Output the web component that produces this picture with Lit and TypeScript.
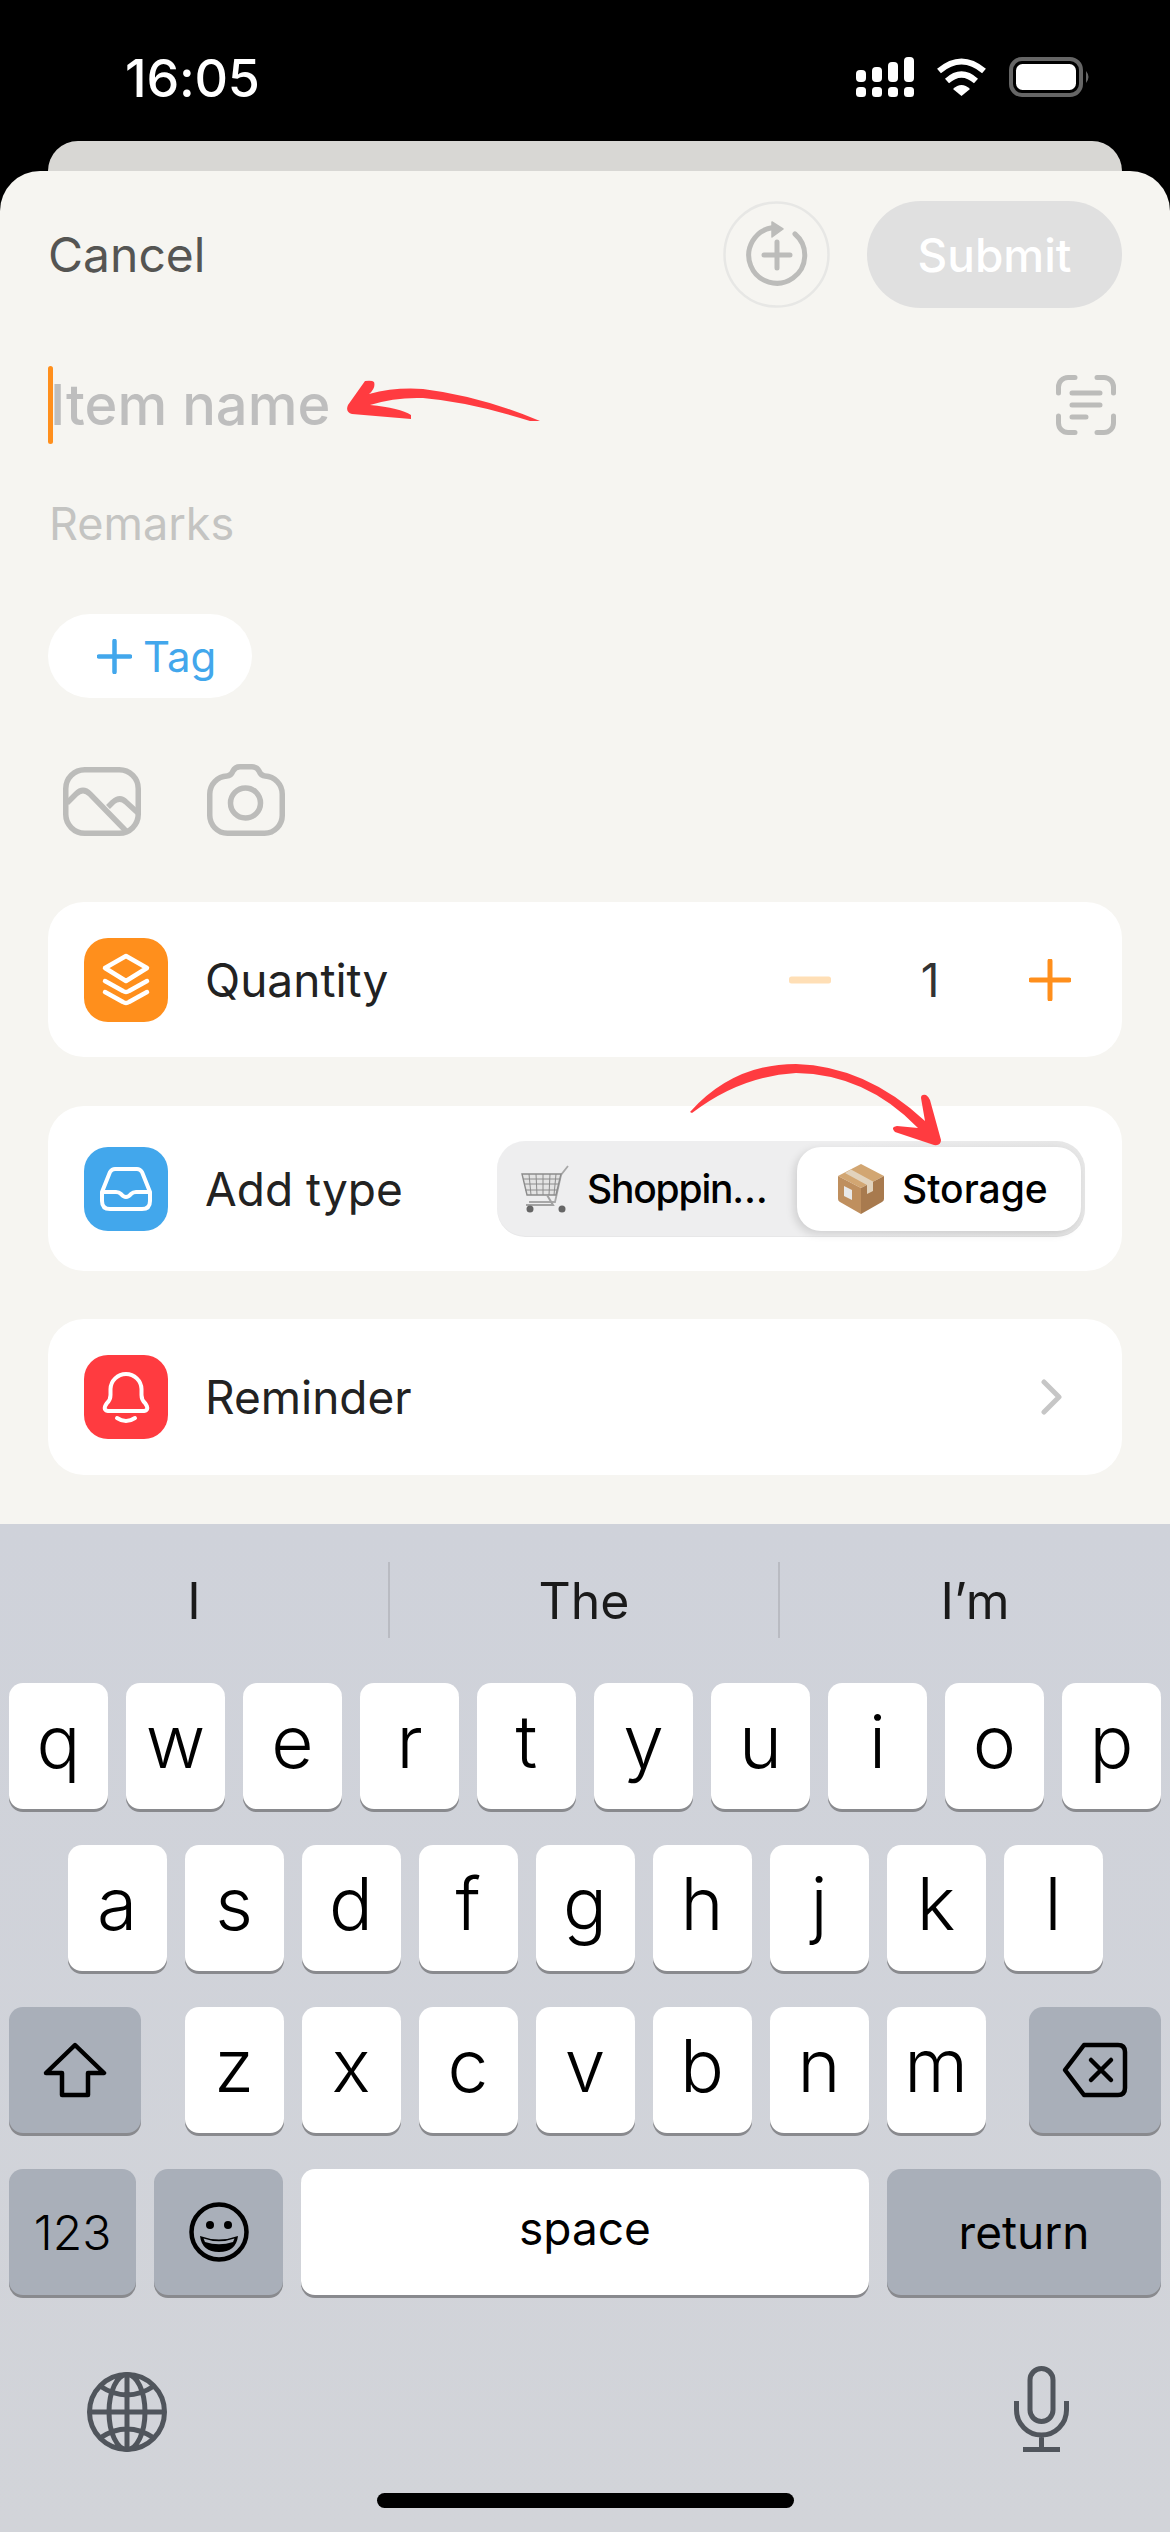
import { LitElement, html, css } from "lit";
import { customElement } from "lit/decorators.js";

const row1 = "qwertyuiop".split("");
const row2 = "asdfghjkl".split("");
const row3 = "zxcvbnm".split("");

@customElement("app-root")
export class AppRoot extends LitElement {
  static styles = css`
    :host { display: block; position: relative; width: 1170px; height: 2532px; background: #000; overflow: hidden; font-family: Inter, "Noto Sans", sans-serif; }
    .page { display: flex; flex-direction: column; height: 2532px; }
    .status { height: 141px; flex: none; display: flex; align-items: flex-start; padding: 57px 79px 0 125px; box-sizing: border-box; justify-content: space-between; color: #fff; }
    .time { font-size: 52px; font-weight: 500; line-height: 44px; letter-spacing: -0.2px; }
    .status-icons { display: flex; align-items: flex-start; gap: 22px; }
    .backsheet { height: 30px; flex: none; margin: 0 48px; background: #d8d7d4; border-radius: 34px 34px 0 0; }
    .sheet { height: 1353px; flex: none; box-sizing: border-box; background: #f6f5f1; border-radius: 40px 40px 0 0; padding: 30px 48px 0; display: flex; flex-direction: column; }
    .header { display: flex; align-items: center; height: 107px; }
    .cancel { font-size: 48px; color: #555553; flex: 1; }
    .submit { width: 255px; height: 107px; border-radius: 54px; background: #e0e0e0; color: #fff; font-size: 46px; font-weight: 500; display: flex; align-items: center; justify-content: center; margin-left: 37px; }
    .name-row { display: flex; align-items: center; height: 78px; margin-top: 58px; position: relative; }
    .caret { width: 5px; height: 78px; background: #ff8f1c; border-radius: 3px; flex: none; }
    .name { font-size: 56px; font-weight: 500; color: #bebebe; margin-left: -3px; flex: 1; line-height: 78px; }
    .scan { margin-right: 6px; }
    .remarks { font-size: 45px; color: #c4c4c2; margin-top: 49px; line-height: 62px; padding-left: 1px; }
    .tag { align-self: flex-start; width: 204px; height: 84px; border-radius: 42px; background: #fff; color: #42a7ec; font-size: 42px; display: flex; align-items: center; box-sizing: border-box; padding-left: 49px; gap: 11px; margin-top: 59px; }
    .media { display: flex; align-items: flex-end; gap: 66px; padding-left: 15px; margin-top: 66px; height: 72px; }
    .card { background: #fff; border-radius: 36px; display: flex; align-items: center; padding: 0 36px; box-sizing: border-box; }
    .card.q { height: 155px; margin-top: 66px; }
    .card.t { height: 165px; margin-top: 49px; }
    .card.r { height: 156px; margin-top: 48px; }
    .app-icon { width: 84px; height: 84px; border-radius: 24px; flex: none; display: block; }
    .label { font-size: 46px; color: #222; margin-left: 37px; flex: 1; }
    .stepper { display: flex; align-items: center; padding-right: 15px; }
    .num { font-size: 46px; color: #333; width: 198px; text-align: center; }
    .segment { width: 588px; height: 96px; box-sizing: border-box; background: linear-gradient(90deg, #eeeeef 60%, #e6e6e6); border-radius: 28px; margin-right: 1px; padding: 6px 4px 6px 24px; display: flex; align-items: center; box-shadow: inset 0 -1px 1px rgba(0,0,0,.03); }
    .seg-off { flex: 1; display: flex; align-items: center; gap: 18px; font-size: 39px; font-weight: 500; letter-spacing: -1.2px; color: #000; white-space: nowrap; }
    .seg-on { width: 284px; height: 84px; box-sizing: border-box; background: #fff; border-radius: 24px; display: flex; align-items: center; gap: 18px; padding-left: 41px; font-size: 39px; font-weight: 500; color: #000; box-shadow: -3px 3px 8px rgba(0,0,0,.13); }
    .chev { margin-right: 24px; }
    .kb { flex: 1; background: linear-gradient(180deg, #cfd2da, #d2d4d9); display: flex; flex-direction: column; position: relative; }
    .sugg { height: 159px; display: grid; grid-template-columns: repeat(3, 1fr); box-sizing: border-box; padding: 38px 0 45px; font-size: 50px; color: #1a1a1a; }
    .sugg div { display: flex; align-items: center; justify-content: center; border-right: 2px solid #b9bbc2; padding-top: 2px; }
    .sugg div:last-child { border-right: 0; }
    .rows { display: flex; flex-direction: column; gap: 36px; padding: 0 9px; }
    .row { display: flex; gap: 18px; justify-content: center; height: 126px; }
    .row.sp { justify-content: space-between; }
    .key { width: 99px; height: 126px; background: #fff; border-radius: 14px; box-shadow: 0 3px 0 #898a8e; display: flex; align-items: center; justify-content: center; font-size: 73px; font-weight: 300; color: #000; padding-bottom: 10px; box-sizing: border-box; flex: none; }
    .key.fn { background: #a9afb9; }
    .key.shift, .key.del { width: 132px; padding: 0; }
    .key.n123 { width: 127px; font-size: 48px; font-weight: 300; padding: 0; }
    .key.emoji { width: 129px; padding: 0; }
    .key.space { width: 568px; font-size: 46px; font-weight: 400; padding-bottom: 8px; }
    .key.ret { width: 274px; font-size: 46px; font-weight: 400; padding: 0; }
    .letters { display: flex; gap: 18px; }
    .bottom { display: flex; justify-content: space-between; align-items: flex-end; padding: 0 101px 0 87px; margin-top: 71px; height: 86px; }
    .home { position: absolute; left: 377px; bottom: 24px; width: 417px; height: 15px; background: #000; border-radius: 8px; }
    .overlay { position: absolute; left: 0; top: 0; pointer-events: none; }
  `;

  render() {
    return html`
      <div class="page">
        <div class="status">
          <div class="time">16:05</div>
          <div class="status-icons">
            <svg width="58" height="40" viewBox="0 0 58 40" fill="#fff">
              <rect x="0" y="13" width="10" height="12" rx="4"/><rect x="16" y="10" width="10" height="15" rx="4"/><rect x="32" y="5" width="10" height="20" rx="4"/><rect x="48" y="0" width="10" height="25" rx="4"/>
              <rect x="0" y="30" width="10" height="10" rx="3.5"/><rect x="16" y="30" width="10" height="10" rx="3.5"/><rect x="32" y="30" width="10" height="10" rx="3.5"/><rect x="48" y="30" width="10" height="10" rx="3.5"/>
            </svg>
            <svg width="51" height="39" viewBox="0 0 51 39" style="margin-top:1px">
              <path d="M3 13 Q25.5 -6 48 13" fill="none" stroke="#fff" stroke-width="6"/>
              <path d="M11 23 Q25.5 10 40 23" fill="none" stroke="#fff" stroke-width="6"/>
              <path d="M17 31 Q25.5 23 34 31 L25.5 38 Z" fill="#fff"/>
            </svg>
            <svg width="82" height="40" viewBox="0 0 82 40">
              <rect x="2" y="2" width="70" height="36" rx="11" fill="none" stroke="#666" stroke-width="4"/>
              <rect x="7" y="7" width="60" height="26" rx="6.5" fill="#fff"/>
              <path d="M77 14 Q82 20 77 26 Z" fill="#666"/>
            </svg>
          </div>
        </div>
        <div class="backsheet"></div>
        <div class="sheet">
          <div class="header">
            <div class="cancel">Cancel</div>
            <svg width="107" height="107" viewBox="0 0 107 107" fill="none">
              <circle cx="53.5" cy="53.5" r="52" stroke="#e7e7e5" stroke-width="2.5"/>
              <path d="M72 33 A28 28 0 1 1 50 26.5" stroke="#bcbcba" stroke-width="5" stroke-linecap="round"/>
              <path d="M49 21 L60 28 L49 36 Z" fill="#bcbcba" stroke="#bcbcba" stroke-width="1.5" stroke-linejoin="round"/>
              <path d="M54 41 V67 M41 54 H67" stroke="#bcbcba" stroke-width="5" stroke-linecap="round"/>
            </svg>
            <div class="submit">Submit</div>
          </div>
          <div class="name-row">
            <div class="caret"></div>
            <div class="name">Item name</div>
            <svg class="scan" width="60" height="60" viewBox="0 0 60 60" fill="none" stroke="#bcbcba" stroke-width="5" stroke-linecap="round">
              <path d="M2.5 18 V12 A9.5 9.5 0 0 1 12 2.5 H19 M41 2.5 H48 A9.5 9.5 0 0 1 57.5 12 V18 M57.5 41 V48 A9.5 9.5 0 0 1 48 57.5 H41 M19 57.5 H12 A9.5 9.5 0 0 1 2.5 48 V41"/>
              <path d="M16 18 H44 M16 30 H44 M16 42 H30"/>
            </svg>
          </div>
          <div class="remarks">Remarks</div>
          <div class="tag">
            <svg width="35" height="35" viewBox="0 0 35 35" fill="none" stroke="#42a7ec" stroke-width="4.5" stroke-linecap="round" style="flex:none"><path d="M17.5 2 V33 M2 17.5 H33"/></svg>
            <span>Tag</span>
          </div>
          <div class="media">
            <svg width="78" height="69" viewBox="0 0 78 69" fill="none" stroke="#bcbcba" stroke-width="5.5" stroke-linejoin="round">
              <rect x="2.75" y="2.75" width="72.5" height="63.5" rx="19"/>
              <path d="M4 36 L13 27 Q20 20 27 27 L63 64"/>
              <path d="M45 40 L50 35 Q57 29 63 35 L75 46"/>
            </svg>
            <svg width="78" height="72" viewBox="0 0 78 72" fill="none" stroke="#bcbcba" stroke-width="5.5" stroke-linejoin="round">
              <path d="M2.75 30 A18 18 0 0 1 20 12 Q24 12 26 7 Q28 2.75 33 2.75 H45 Q50 2.75 52 7 Q54 12 58 12 A18 18 0 0 1 75.25 30 V51 A18 18 0 0 1 57.5 69.25 H20.5 A18 18 0 0 1 2.75 51 Z"/>
              <circle cx="38.5" cy="39" r="15"/>
            </svg>
          </div>
          <div class="card q">
            <svg class="app-icon" viewBox="0 0 84 84" fill="none" stroke="#fff" stroke-width="4.5" stroke-linecap="round" stroke-linejoin="round" style="background:#ff8f1c">
              <path d="M42 18 L63 30 L42 43 L21 30 Z"/>
              <path d="M21 43 L39 53 Q42 55 45 53 L63 43"/>
              <path d="M21 54 L39 64 Q42 66 45 64 L63 54"/>
            </svg>
            <div class="label">Quantity</div>
            <div class="stepper">
              <svg width="42" height="8" viewBox="0 0 42 8"><rect width="42" height="7" y="0.5" rx="2.5" fill="#ffdfb6"/></svg>
              <div class="num">1</div>
              <svg width="42" height="42" viewBox="0 0 42 42" fill="none" stroke="#ff8f1c" stroke-width="5" stroke-linecap="round"><path d="M21 2 V40 M2 21 H40"/></svg>
            </div>
          </div>
          <div class="card t">
            <svg class="app-icon" viewBox="0 0 84 84" fill="none" stroke="#fff" stroke-width="4" stroke-linejoin="round" style="background:#42a7ec">
              <path d="M31 22 H53 Q56 22 58 25 L66 45 V54 Q66 62 58 62 H26 Q18 62 18 54 V45 L26 25 Q28 22 31 22 Z"/>
              <path d="M18 45 H32 Q35 45 37 47 Q42 53 47 47 Q49 45 52 45 H66"/>
            </svg>
            <div class="label">Add type</div>
            <div class="segment">
              <div class="seg-off">
                <svg width="48" height="48" viewBox="0 0 48 48" fill="none" stroke="#9a9a9a" style="flex:none">
                  <path d="M47 1 L40 10 L34 37 H8" stroke="#a8a8a8" stroke-width="1.8"/>
                  <path d="M1 9 H40 L35 30 H6 Z" fill="#e3e3e3" stroke="#8c8c8c" stroke-width="1.4"/>
                  <path d="M8 9 L10 30 M15 9 L16 30 M22 9 L22 30 M29 9 L28 30 M35 9 L33 30 M2 14 H39 M3 19 H38 M4 25 H37" stroke="#8c8c8c" stroke-width="1"/>
                  <path d="M26 30 L32 40 H5" stroke="#a2a2a2" stroke-width="2"/>
                  <circle cx="9" cy="44" r="3.5" fill="#666" stroke="none"/><circle cx="41" cy="44" r="3.5" fill="#666" stroke="none"/>
                </svg>
                <span>Shoppin…</span>
              </div>
              <div class="seg-on">
                <svg width="46" height="50" viewBox="0 0 46 50" style="flex:none">
                  <path d="M23 0 L46 12 L23 24 L0 12 Z" fill="#d2a672"/>
                  <path d="M0 12 L23 24 V50 L2 38 Q0 37 0 35 Z" fill="#bf8f5e"/>
                  <path d="M46 12 L23 24 V50 L44 38 Q46 37 46 35 Z" fill="#a87a4e"/>
                  <path d="M13 5.5 L35 17.5 L35 27 L29 30 V21 L7 9 Z" fill="#e2d3bd"/>
                  <path d="M6 22 L14 26 V36 L6 32 Z" fill="#e8e8e8"/>
                </svg>
                <span>Storage</span>
              </div>
            </div>
          </div>
          <div class="card r">
            <svg class="app-icon" viewBox="0 0 84 84" fill="none" stroke="#fff" stroke-width="4" stroke-linecap="round" stroke-linejoin="round" style="background:#ff3b40">
              <path d="M42 19 A15.5 15.5 0 0 1 57.5 34 V40 Q57.5 45 61 48 Q66 55 60 56 H24 Q18 55 23 48 Q26.5 45 26.5 40 V34 A15.5 15.5 0 0 1 42 19 Z"/>
              <path d="M33 63 Q42 69 51 63"/>
            </svg>
            <div class="label">Reminder</div>
            <svg class="chev" width="21" height="36" viewBox="0 0 21 36" fill="none" stroke="#c6c6c6" stroke-width="5" stroke-linecap="round" stroke-linejoin="round"><path d="M3 3 L18 18 L3 33"/></svg>
          </div>
        </div>
        <div class="kb">
          <div class="sugg"><div>I</div><div>The</div><div>I’m</div></div>
          <div class="rows">
            <div class="row">${row1.map((k) => html`<div class="key">${k}</div>`)}</div>
            <div class="row">${row2.map((k) => html`<div class="key">${k}</div>`)}</div>
            <div class="row sp">
              <div class="key fn shift">
                <svg width="64" height="56" viewBox="0 0 64 56" fill="none" stroke="#000" stroke-width="4.5" stroke-linejoin="round"><path d="M32 3 L61 31 H45 V53 H19 V31 H3 Z"/></svg>
              </div>
              <div class="letters">${row3.map((k) => html`<div class="key">${k}</div>`)}</div>
              <div class="key fn del">
                <svg width="66" height="56" viewBox="0 0 66 56" fill="none" stroke="#000" stroke-width="4.5" stroke-linejoin="round" stroke-linecap="round"><path d="M22 3 H56 Q63 3 63 10 V46 Q63 53 56 53 H22 L3 28 Z"/><path d="M29 18 L49 38 M49 18 L29 38"/></svg>
              </div>
            </div>
            <div class="row sp">
              <div class="key fn n123">123</div>
              <div class="key fn emoji">
                <svg width="60" height="60" viewBox="0 0 60 60">
                  <circle cx="30" cy="30" r="27.5" fill="none" stroke="#000" stroke-width="4.5"/>
                  <circle cx="21" cy="23" r="4" /><circle cx="39" cy="23" r="4"/>
                  <path d="M11 34 Q30 41 49 34 Q47 50 30 50 Q13 50 11 34 Z" fill="#000"/>
                  <path d="M14.5 36.5 Q30 42 45.5 36.5 L44 40 Q30 44.5 16 40 Z" fill="#a9afb9"/>
                </svg>
              </div>
              <div class="key space">space</div>
              <div class="key fn ret">return</div>
            </div>
          </div>
          <div class="bottom">
            <svg width="80" height="80" viewBox="0 0 80 80" fill="none" stroke="#50555c" stroke-width="5">
              <circle cx="40" cy="40" r="37.5"/>
              <ellipse cx="40" cy="40" rx="18" ry="37.5"/>
              <path d="M40 2.5 V77.5 M2.5 40 H77.5 M13 14 Q40 32 67 14 M13 66 Q40 48 67 66"/>
            </svg>
            <svg width="55" height="86" viewBox="0 0 55 86" fill="none" stroke="#50555c" stroke-width="5">
              <rect x="16" y="2.5" width="23" height="53" rx="11.5"/>
              <path d="M2.5 35 V44 A25 25 0 0 0 52.5 44 V35 M27.5 69 V82"/>
              <path d="M9 83.5 H46"/>
            </svg>
          </div>
          <div class="home"></div>
        </div>
      </div>
      <svg class="overlay" width="1170" height="2532" viewBox="0 0 1170 2532" fill="#ff3b40">
        <path d="M540 421 Q480 396 423 389 Q395 387 369 394 Q376 388 374 382 Q372 380 365 381 L348 405 Q345 412 352 414 L411 419 L411 415 Q400 408 370 405 Q395 397 423 398 Q470 402 530 421 Z"/>
        <path d="M690 1112 Q733 1064 796 1064 Q866 1066 925 1121 L921 1098 Q921 1094 926 1095 Q929 1097 930 1100 L941 1140 Q941 1146 934 1145 L895 1132 Q890 1127 897 1126 L918 1128 Q866 1074 796 1073 Q740 1076 692 1113 Z"/>
      </svg>
    `;
  }
}
